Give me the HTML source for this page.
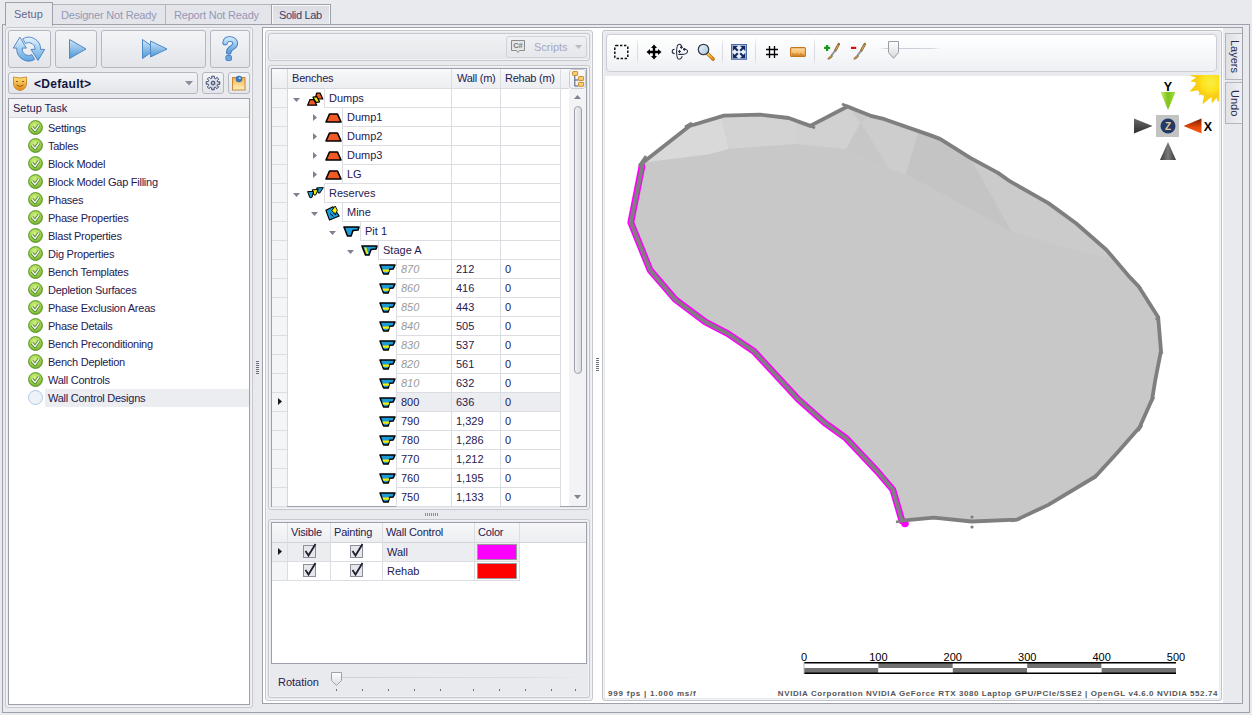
<!DOCTYPE html>
<html><head><meta charset="utf-8">
<style>
*{margin:0;padding:0;box-sizing:border-box}
html,body{width:1252px;height:715px;overflow:hidden;background:#e9eaee;font-family:"Liberation Sans",sans-serif;font-size:11px;color:#1f2050;position:relative}
.a{position:absolute}
.t{position:absolute;white-space:nowrap;line-height:19px;height:19px}
.bd{border:1px solid #9ea1ab}
.lb{border:1px solid #c6c8ce;border-radius:3px;box-shadow:inset 0 0 0 1px #f2f3f6}
.btn{position:absolute;border:1px solid #b5b8c1;border-radius:3px;background:linear-gradient(#f3f4f6,#e3e5ea)}
.row{position:absolute;height:20px;border-top:1px solid #dcdde2;border-bottom:1px solid #dcdde2}
.vl{position:absolute;width:1px;background:#dcdde2;z-index:1}
.hl{position:absolute;height:1px;background:#dcdde2;z-index:1}
</style></head><body>

<!-- ============ TABS ============ -->
<div class="a" style="left:2px;top:24px;width:1248px;height:1px;background:#9ea1ab"></div>
<div class="a" style="left:52px;top:4px;width:114px;height:21px;border:1px solid #b3b6bf;border-bottom:none;background:#e4e5ea"></div>
<div class="t" style="left:61px;top:6px;color:#9598b6;letter-spacing:-0.2px">Designer Not Ready</div>
<div class="a" style="left:166px;top:4px;width:106px;height:21px;border:1px solid #b3b6bf;border-left:none;border-bottom:none;background:#e4e5ea"></div>
<div class="t" style="left:174px;top:6px;color:#9598b6;letter-spacing:-0.2px">Report Not Ready</div>
<div class="a" style="left:271px;top:4px;width:60px;height:21px;border:1px solid #9ea1ab;border-bottom:none;background:linear-gradient(#dcdde2,#e6e7eb);box-shadow:inset 1px 1px 0 #f8f8fa,inset -1px 0 0 #f8f8fa"></div>
<div class="t" style="left:279px;top:6px;color:#3a3c6a;letter-spacing:-0.35px">Solid Lab</div>
<div class="a" style="left:5px;top:2px;width:48px;height:24px;border:1px solid #9ea1ab;border-bottom:none;background:#e9eaee"></div>
<div class="t" style="left:14px;top:5px;color:#65678b">Setup</div>

<!-- outer tab page border -->
<div class="a" style="left:2px;top:24px;width:1248px;height:689px;border:1px solid #9ea1ab;border-top:none"></div>
<div class="a" style="left:2px;top:24px;width:3px;height:1px;background:#9ea1ab"></div>
<div class="a" style="left:53px;top:24px;width:1197px;height:1px;background:#9ea1ab"></div>
<div class="a" style="left:6px;top:25px;width:46px;height:2px;background:#e9eaee"></div>

<!-- ============ LEFT PANEL ============ -->

<div class="a lb" style="left:5px;top:27px;width:248px;height:681px"></div>
<div class="btn" style="left:8px;top:30px;width:43px;height:38px"></div>
<div class="btn" style="left:55px;top:30px;width:42px;height:38px"></div>
<div class="btn" style="left:101px;top:30px;width:105px;height:38px"></div>
<div class="btn" style="left:210px;top:30px;width:40px;height:38px"></div>
<svg class="a" style="left:8px;top:30px" width="42" height="37" viewBox="0 0 42 37">
 <defs><linearGradient id="gb" gradientUnits="userSpaceOnUse" x1="0" y1="7" x2="0" y2="31"><stop offset="0" stop-color="#e6f5fe"/><stop offset="1" stop-color="#5fa6e2"/></linearGradient>
 <linearGradient id="gb2" x1="0" y1="0" x2="0" y2="1"><stop offset="0" stop-color="#cfe6f8"/><stop offset="1" stop-color="#4d97d6"/></linearGradient></defs>
 <g fill="url(#gb)" stroke="#3a74bd" stroke-width="0.8" stroke-linejoin="round">
 <path d="M11.9 7.2 L18.4 18.1 L14.2 18.1 A6.5 6.5 0 0 0 23.95 24.7 L26.65 29.4 A11.9 11.9 0 0 1 8.8 18.1 L5.2 18.1 Z"/>
 <path d="M30 30.5 L23 19.4 L27.2 19.4 A6.5 6.5 0 0 0 17.45 13.47 L14.75 8.8 A11.9 11.9 0 0 1 32.6 19.4 L36.7 19.4 Z"/>
 </g>
</svg>
<svg class="a" style="left:68px;top:38px" width="20" height="22" viewBox="0 0 20 22"><path d="M1.5 1.5 L18 11 L1.5 20.5 Z" fill="url(#gb2)" stroke="#4d88c8" stroke-width="1"/></svg>
<svg class="a" style="left:141px;top:38px" width="28" height="22" viewBox="0 0 28 22"><path d="M1.5 1.5 L15 11 L1.5 20.5 Z" fill="url(#gb2)" stroke="#4d88c8" stroke-width="1"/><path d="M9.5 3 L26 11 L9.5 19 Z" fill="url(#gb2)" stroke="#4d88c8" stroke-width="1"/></svg>
<svg class="a" style="left:210px;top:30px" width="40" height="37" viewBox="0 0 40 37"><defs><linearGradient id="gq" x1="0" y1="0" x2="0" y2="1"><stop offset="0" stop-color="#c5e4fa"/><stop offset="1" stop-color="#5f9fdc"/></linearGradient></defs><path d="M15.2 12.6 C15.6 10 17.8 9 19.8 9 C23.2 9 25.2 11 25.2 13.6 C25.2 16.3 22.6 17.2 20.6 18.7 C19.2 19.8 18.8 20.8 18.8 22" fill="none" stroke="#3a74bd" stroke-width="5.6" stroke-linecap="round"/><path d="M15.2 12.6 C15.6 10 17.8 9 19.8 9 C23.2 9 25.2 11 25.2 13.6 C25.2 16.3 22.6 17.2 20.6 18.7 C19.2 19.8 18.8 20.8 18.8 22" fill="none" stroke="url(#gq)" stroke-width="3.9" stroke-linecap="round"/><rect x="15.9" y="25.5" width="5.6" height="5" rx="1.2" fill="#6aa7e0" stroke="#3a74bd" stroke-width="0.8"/></svg>

<div class="btn" style="left:8px;top:72px;width:190px;height:22px"></div>
<svg class="a" style="left:12px;top:75px" width="16" height="16" viewBox="0 0 16 16"><defs><linearGradient id="gm" x1="0" y1="0" x2="0" y2="1"><stop offset="0" stop-color="#ffe27a"/><stop offset="1" stop-color="#e08b1a"/></linearGradient></defs><path d="M1.5 2 Q8 4 14.5 2 L14.5 9 Q14 14.5 8 15.5 Q2 14.5 1.5 9 Z" fill="url(#gm)" stroke="#c77a14" stroke-width="0.8"/><path d="M4 6.5 L6 6.5 M10 6.5 L12 6.5" stroke="#9a5a10" stroke-width="1"/><path d="M4.5 10 Q8 13 11.5 10" fill="none" stroke="#9a5a10" stroke-width="1"/></svg>
<div class="t" style="left:34px;top:74px;font-weight:bold;font-size:12px;color:#10163f;height:20px;line-height:20px;letter-spacing:0.3px">&lt;Default&gt;</div>
<svg class="a" style="left:185px;top:81px" width="8" height="5" viewBox="0 0 8 5"><path d="M0 0 L8 0 L4 4.5 Z" fill="#8d909c"/></svg>
<div class="btn" style="left:202px;top:72px;width:22px;height:22px"></div>
<svg class="a" style="left:205px;top:75px" width="16" height="16" viewBox="0 0 16 16"><defs><linearGradient id="gear" x1="0" y1="0" x2="1" y2="1"><stop offset="0" stop-color="#ffffff"/><stop offset="1" stop-color="#b9bfcc"/></linearGradient></defs><path d="M6.68 1.23 L9.32 1.23 L9.38 3.19 L10.80 3.85 L11.86 2.28 L13.72 4.14 L12.37 5.58 L12.91 7.05 L14.77 6.68 L14.77 9.32 L12.81 9.38 L12.15 10.80 L13.72 11.86 L11.86 13.72 L10.42 12.37 L8.95 12.91 L9.32 14.77 L6.68 14.77 L6.62 12.81 L5.20 12.15 L4.14 13.72 L2.28 11.86 L3.63 10.42 L3.09 8.95 L1.23 9.32 L1.23 6.68 L3.19 6.62 L3.85 5.20 L2.28 4.14 L4.14 2.28 L5.58 3.63 L7.05 3.09 Z" fill="url(#gear)" stroke="#2e3a66" stroke-width="0.9" stroke-linejoin="round"/><circle cx="8" cy="8" r="1.9" fill="#b5b8c2" stroke="#2e3a66" stroke-width="0.9"/></svg>
<div class="btn" style="left:228px;top:72px;width:22px;height:22px"></div>
<svg class="a" style="left:231px;top:74px" width="16" height="17" viewBox="0 0 16 17"><defs><linearGradient id="gn" x1="0" y1="0" x2="0" y2="1"><stop offset="0" stop-color="#f3b445"/><stop offset="1" stop-color="#fff2c4"/></linearGradient></defs><rect x="1.5" y="3.5" width="12.5" height="12.5" fill="url(#gn)" stroke="#c9893a" stroke-width="1"/><circle cx="8" cy="5" r="3" fill="#3d7fd0" stroke="#275c9e" stroke-width="0.6"/><circle cx="8.8" cy="4.2" r="0.9" fill="#cfe2f7"/></svg>

<div class="a bd" style="left:8px;top:98px;width:242px;height:607px;background:#fff"></div>
<div class="a" style="left:9px;top:99px;width:240px;height:19px;background:linear-gradient(#f6f6f8,#eeeff2);border-bottom:1px solid #d6d8de"></div>
<div class="t" style="left:13px;top:99px;height:19px;line-height:19px">Setup Task</div>
<div class="a" style="left:45px;top:389px;width:204px;height:18px;background:#ecedf0"></div>
<svg width="0" height="0" style="position:absolute"><defs>
<radialGradient id="gg" cx="0.45" cy="0.35" r="0.7"><stop offset="0" stop-color="#d2f08a"/><stop offset="0.55" stop-color="#a2d64c"/><stop offset="1" stop-color="#6aa82a"/></radialGradient>
<symbol id="chk" viewBox="0 0 15 15"><circle cx="7.5" cy="7.5" r="6.9" fill="url(#gg)" stroke="#4b8a1e" stroke-width="0.9"/><path d="M4.1 7.3 L7 10.6 L11 5" fill="none" stroke="#3f7420" stroke-width="3" stroke-linejoin="round"/><path d="M4.1 7.3 L7 10.6 L11 5" fill="none" stroke="#f2f4f0" stroke-width="1.5" stroke-linejoin="round"/></symbol>
</defs></svg>

<svg class="a" style="left:28px;top:120px" width="15" height="15" viewBox="0 0 15 15"><use href="#chk"/></svg>
<div class="t" style="left:48px;top:119px;height:18px;line-height:18px;letter-spacing:-0.25px">Settings</div>
<svg class="a" style="left:28px;top:138px" width="15" height="15" viewBox="0 0 15 15"><use href="#chk"/></svg>
<div class="t" style="left:48px;top:137px;height:18px;line-height:18px;letter-spacing:-0.25px">Tables</div>
<svg class="a" style="left:28px;top:156px" width="15" height="15" viewBox="0 0 15 15"><use href="#chk"/></svg>
<div class="t" style="left:48px;top:155px;height:18px;line-height:18px;letter-spacing:-0.25px">Block Model</div>
<svg class="a" style="left:28px;top:174px" width="15" height="15" viewBox="0 0 15 15"><use href="#chk"/></svg>
<div class="t" style="left:48px;top:173px;height:18px;line-height:18px;letter-spacing:-0.25px">Block Model Gap Filling</div>
<svg class="a" style="left:28px;top:192px" width="15" height="15" viewBox="0 0 15 15"><use href="#chk"/></svg>
<div class="t" style="left:48px;top:191px;height:18px;line-height:18px;letter-spacing:-0.25px">Phases</div>
<svg class="a" style="left:28px;top:210px" width="15" height="15" viewBox="0 0 15 15"><use href="#chk"/></svg>
<div class="t" style="left:48px;top:209px;height:18px;line-height:18px;letter-spacing:-0.25px">Phase Properties</div>
<svg class="a" style="left:28px;top:228px" width="15" height="15" viewBox="0 0 15 15"><use href="#chk"/></svg>
<div class="t" style="left:48px;top:227px;height:18px;line-height:18px;letter-spacing:-0.25px">Blast Properties</div>
<svg class="a" style="left:28px;top:246px" width="15" height="15" viewBox="0 0 15 15"><use href="#chk"/></svg>
<div class="t" style="left:48px;top:245px;height:18px;line-height:18px;letter-spacing:-0.25px">Dig Properties</div>
<svg class="a" style="left:28px;top:264px" width="15" height="15" viewBox="0 0 15 15"><use href="#chk"/></svg>
<div class="t" style="left:48px;top:263px;height:18px;line-height:18px;letter-spacing:-0.25px">Bench Templates</div>
<svg class="a" style="left:28px;top:282px" width="15" height="15" viewBox="0 0 15 15"><use href="#chk"/></svg>
<div class="t" style="left:48px;top:281px;height:18px;line-height:18px;letter-spacing:-0.25px">Depletion Surfaces</div>
<svg class="a" style="left:28px;top:300px" width="15" height="15" viewBox="0 0 15 15"><use href="#chk"/></svg>
<div class="t" style="left:48px;top:299px;height:18px;line-height:18px;letter-spacing:-0.25px">Phase Exclusion Areas</div>
<svg class="a" style="left:28px;top:318px" width="15" height="15" viewBox="0 0 15 15"><use href="#chk"/></svg>
<div class="t" style="left:48px;top:317px;height:18px;line-height:18px;letter-spacing:-0.25px">Phase Details</div>
<svg class="a" style="left:28px;top:336px" width="15" height="15" viewBox="0 0 15 15"><use href="#chk"/></svg>
<div class="t" style="left:48px;top:335px;height:18px;line-height:18px;letter-spacing:-0.25px">Bench Preconditioning</div>
<svg class="a" style="left:28px;top:354px" width="15" height="15" viewBox="0 0 15 15"><use href="#chk"/></svg>
<div class="t" style="left:48px;top:353px;height:18px;line-height:18px;letter-spacing:-0.25px">Bench Depletion</div>
<svg class="a" style="left:28px;top:372px" width="15" height="15" viewBox="0 0 15 15"><use href="#chk"/></svg>
<div class="t" style="left:48px;top:371px;height:18px;line-height:18px;letter-spacing:-0.25px">Wall Controls</div>
<svg class="a" style="left:28px;top:390px" width="15" height="15" viewBox="0 0 15 15"><circle cx="7.5" cy="7.5" r="7" fill="#edf1f8" stroke="#a9c3e2" stroke-width="0.9"/></svg>
<div class="t" style="left:48px;top:389px;height:18px;line-height:18px;letter-spacing:-0.25px">Wall Control Designs</div>



<!-- ============ RIGHT CONTAINER ============ -->
<div class="a" style="left:262px;top:27px;width:981px;height:677px;border:1px solid #9ea1ab;background:#fff"></div>

<svg width="0" height="0" style="position:absolute"><defs>
<symbol id="trap" viewBox="0 0 17 10"><path d="M4.5 1 L12.5 1 L16 9 L1 9 Z" fill="#f15a24" stroke="#000" stroke-width="1.6" stroke-linejoin="round"/></symbol>
<symbol id="dumps" viewBox="0 0 17 14"><path d="M9.6 1.2 L13.2 1.2 L15.8 7 L8.2 7 Z" fill="#f15a24" stroke="#000" stroke-width="1.2" stroke-linejoin="round"/><path d="M6 5.2 L9.8 4.6 L12.6 9.8 L8.8 10.4 Z" fill="#f5f000" stroke="#000" stroke-width="1.2" stroke-linejoin="round"/><path d="M3 7.6 L6.8 7.6 L9.8 13.2 L0.6 13.2 Z" fill="#f15a24" stroke="#000" stroke-width="1.2" stroke-linejoin="round"/></symbol>
<symbol id="pit" viewBox="0 0 17 11"><path d="M1 1 L16 1 L15 4 L10 4.5 L8 10 L4.5 10 Z" fill="#1b9bd7" stroke="#000" stroke-width="1.6" stroke-linejoin="round"/></symbol>
<symbol id="stage" viewBox="0 0 17 11"><path d="M1 1 L16 1 L15 4 L10 4.5 L8 10 L4.5 10 Z" fill="#1b9bd7" stroke="#000" stroke-width="1.6" stroke-linejoin="round"/><path d="M3.2 2.5 L5.3 2.5 L7.3 9 L5.6 9 Z" fill="#f5f000"/></symbol>
<symbol id="bench" viewBox="0 0 17 11"><path d="M1 0.9 L16 0.9 L14.2 4.9 L10.6 5.3 L9.2 10.1 L4.6 10.1 Z" fill="#1b9bd7" stroke="#000" stroke-width="1.5" stroke-linejoin="round"/><path d="M3.4 5.5 L10.4 5.5 L9.9 7.7 L4.1 7.7 Z" fill="#f5f000"/></symbol>
<symbol id="mine" viewBox="0 0 15 16"><path d="M0.9 5.3 L8 1.8 L14.2 11.1 L4.5 15.1 Z" fill="#1b9bd7" stroke="#000" stroke-width="1.1" stroke-linejoin="round"/><path d="M5 8.5 L8.5 11.5 M8 7.5 L11 10" stroke="#000" stroke-width="0.9"/><path d="M6.8 5.5 L10.2 1 L12.3 5.3 L10.6 9 L8.6 7.5 Z" fill="#f5f000" stroke="#000" stroke-width="0.9" stroke-linejoin="round"/></symbol>
<symbol id="reserves" viewBox="0 0 17 12"><path d="M9.6 0.9 L16.3 0.6 L12.8 6 L11.2 6 Z" fill="#1b9bd7" stroke="#000" stroke-width="1" stroke-linejoin="round"/><path d="M5.2 2.8 L11.2 2.5 L8.6 8 L7 8 Z" fill="#f5f000" stroke="#000" stroke-width="1" stroke-linejoin="round"/><path d="M0.6 4.6 L6.6 4.4 L4.9 10.6 L2.8 10.6 Z" fill="#1b9bd7" stroke="#000" stroke-width="1" stroke-linejoin="round"/></symbol>
<symbol id="exd" viewBox="0 0 7 4"><path d="M0 0 L7 0 L3.5 4 Z" fill="#7d8190"/></symbol>
<symbol id="exr" viewBox="0 0 4 7"><path d="M0 0 L4 3.5 L0 7 Z" fill="#7d8190"/></symbol>
</defs></svg>
<!-- middle panel -->
<div class="a lb" style="left:265px;top:30px;width:328px;height:671px;background:#e9eaee"></div>
<div class="a lb" style="left:268px;top:33px;width:322px;height:28px;background:linear-gradient(#f1f2f4,#e5e6ea)"></div>
<div class="a" style="left:506px;top:36px;width:81px;height:22px;border:1px solid #d0d2d8;border-radius:3px;background:linear-gradient(#eff0f3,#e6e7eb)"></div>
<svg class="a" style="left:510px;top:39px" width="16" height="16" viewBox="0 0 16 16"><path d="M1.5 1.5 H14.5 V11.5 H9.5 L8 13.5 L6.5 11.5 H1.5 Z" fill="#e6e6e6" stroke="#8b8b8b" stroke-width="1"/><text x="8" y="9.2" font-family="Liberation Sans" font-size="7.5" text-anchor="middle" fill="#7b7b7b" font-weight="bold">C#</text></svg>
<div class="t" style="left:534px;top:37px;height:20px;line-height:20px;color:#a5a8be">Scripts</div>
<svg class="a" style="left:575px;top:45px" width="7" height="4" viewBox="0 0 7 4"><path d="M0 0 L7 0 L3.5 4 Z" fill="#b9bcc6"/></svg>
<div class="a lb" style="left:268px;top:65px;width:322px;height:445px"></div>
<div class="a bd" style="left:271px;top:68px;width:316px;height:439px;background:#fff"></div>
<div class="a" style="left:272px;top:89px;width:15px;height:417px;background:#f4f5f7"></div>
<!-- header -->
<div class="a" style="left:272px;top:69px;width:297px;height:20px;background:linear-gradient(#f8f8fa,#eceef1);border-bottom:1px solid #d2d4da"></div>
<div class="vl" style="left:287px;top:69px;height:437px;background:#d6d8dd"></div>
<div class="vl" style="left:451px;top:69px;height:437px"></div>
<div class="vl" style="left:500px;top:69px;height:437px"></div>
<div class="vl" style="left:560px;top:69px;height:437px"></div>
<div class="t" style="left:292px;top:68px;height:20px;line-height:20px;letter-spacing:-0.2px">Benches</div>
<div class="t" style="left:457px;top:68px;height:20px;line-height:20px;letter-spacing:-0.25px">Wall (m)</div>
<div class="t" style="left:505px;top:68px;height:20px;line-height:20px;letter-spacing:-0.25px">Rehab (m)</div>
<div class="a" style="left:569px;top:69px;width:17px;height:20px;border:1px solid #c9cbd2;border-radius:3px;background:linear-gradient(#fbfbfc,#eceef1)"></div>
<svg class="a" style="left:571px;top:70px" width="15" height="18" viewBox="0 0 15 18"><path d="M3.8 5 V16 H7.5 M3.8 10 H7.5" fill="none" stroke="#48577a" stroke-width="1"/><rect x="1.6" y="1.6" width="5" height="3.8" rx="0.5" fill="#f9d27a" stroke="#cf8a26" stroke-width="1"/><rect x="7.6" y="6.6" width="5" height="3.8" rx="0.5" fill="#f9d27a" stroke="#cf8a26" stroke-width="1"/><rect x="7.6" y="12.4" width="5" height="3.8" rx="0.5" fill="#f9d27a" stroke="#cf8a26" stroke-width="1"/></svg>
<!-- scrollbar -->
<div class="a" style="left:569px;top:89px;width:17px;height:417px;background:#f3f3f5"></div>
<svg class="a" style="left:574px;top:95px" width="7" height="4" viewBox="0 0 7 4"><path d="M0 4 L7 4 L3.5 0 Z" fill="#7d8190"/></svg>
<div class="a" style="left:574px;top:106px;width:8px;height:268px;border:1px solid #9ea1ab;border-radius:4px;background:linear-gradient(90deg,#f2f2f4,#d9dadf)"></div>
<svg class="a" style="left:574px;top:495px" width="7" height="4" viewBox="0 0 7 4"><path d="M0 0 L7 0 L3.5 4 Z" fill="#7d8190"/></svg>

<div class="hl" style="left:272px;top:107px;width:15px"></div>
<div class="hl" style="left:324px;top:88px;width:236px"></div>
<div class="hl" style="left:324px;top:107px;width:236px"></div>
<div class="vl" style="left:324px;top:88px;height:19px"></div>
<svg class="a" style="left:293px;top:98px" width="7" height="4"><use href="#exd"/></svg>
<svg class="a" style="left:307px;top:92px" width="17" height="14"><use href="#dumps"/></svg>
<div class="t" style="left:329px;top:89px;">Dumps</div>
<div class="hl" style="left:272px;top:126px;width:15px"></div>
<div class="hl" style="left:342px;top:107px;width:218px"></div>
<div class="hl" style="left:342px;top:126px;width:218px"></div>
<div class="vl" style="left:342px;top:107px;height:19px"></div>
<svg class="a" style="left:313px;top:114px" width="4" height="7"><use href="#exr"/></svg>
<svg class="a" style="left:325px;top:113px" width="17" height="10"><use href="#trap"/></svg>
<div class="t" style="left:347px;top:108px;">Dump1</div>
<div class="hl" style="left:272px;top:145px;width:15px"></div>
<div class="hl" style="left:342px;top:126px;width:218px"></div>
<div class="hl" style="left:342px;top:145px;width:218px"></div>
<div class="vl" style="left:342px;top:126px;height:19px"></div>
<svg class="a" style="left:313px;top:133px" width="4" height="7"><use href="#exr"/></svg>
<svg class="a" style="left:325px;top:132px" width="17" height="10"><use href="#trap"/></svg>
<div class="t" style="left:347px;top:127px;">Dump2</div>
<div class="hl" style="left:272px;top:164px;width:15px"></div>
<div class="hl" style="left:342px;top:145px;width:218px"></div>
<div class="hl" style="left:342px;top:164px;width:218px"></div>
<div class="vl" style="left:342px;top:145px;height:19px"></div>
<svg class="a" style="left:313px;top:152px" width="4" height="7"><use href="#exr"/></svg>
<svg class="a" style="left:325px;top:151px" width="17" height="10"><use href="#trap"/></svg>
<div class="t" style="left:347px;top:146px;">Dump3</div>
<div class="hl" style="left:272px;top:183px;width:15px"></div>
<div class="hl" style="left:342px;top:164px;width:218px"></div>
<div class="hl" style="left:342px;top:183px;width:218px"></div>
<div class="vl" style="left:342px;top:164px;height:19px"></div>
<svg class="a" style="left:313px;top:171px" width="4" height="7"><use href="#exr"/></svg>
<svg class="a" style="left:325px;top:170px" width="17" height="10"><use href="#trap"/></svg>
<div class="t" style="left:347px;top:165px;">LG</div>
<div class="hl" style="left:272px;top:202px;width:15px"></div>
<div class="hl" style="left:324px;top:183px;width:236px"></div>
<div class="hl" style="left:324px;top:202px;width:236px"></div>
<div class="vl" style="left:324px;top:183px;height:19px"></div>
<svg class="a" style="left:293px;top:193px" width="7" height="4"><use href="#exd"/></svg>
<svg class="a" style="left:307px;top:187px" width="17" height="12"><use href="#reserves"/></svg>
<div class="t" style="left:329px;top:184px;">Reserves</div>
<div class="hl" style="left:272px;top:221px;width:15px"></div>
<div class="hl" style="left:342px;top:202px;width:218px"></div>
<div class="hl" style="left:342px;top:221px;width:218px"></div>
<div class="vl" style="left:342px;top:202px;height:19px"></div>
<svg class="a" style="left:311px;top:212px" width="7" height="4"><use href="#exd"/></svg>
<svg class="a" style="left:325px;top:205px" width="15" height="16"><use href="#mine"/></svg>
<div class="t" style="left:347px;top:203px;">Mine</div>
<div class="hl" style="left:272px;top:240px;width:15px"></div>
<div class="hl" style="left:360px;top:221px;width:200px"></div>
<div class="hl" style="left:360px;top:240px;width:200px"></div>
<div class="vl" style="left:360px;top:221px;height:19px"></div>
<svg class="a" style="left:329px;top:231px" width="7" height="4"><use href="#exd"/></svg>
<svg class="a" style="left:343px;top:226px" width="17" height="11"><use href="#pit"/></svg>
<div class="t" style="left:365px;top:222px;">Pit 1</div>
<div class="hl" style="left:272px;top:259px;width:15px"></div>
<div class="hl" style="left:378px;top:240px;width:182px"></div>
<div class="hl" style="left:378px;top:259px;width:182px"></div>
<div class="vl" style="left:378px;top:240px;height:19px"></div>
<svg class="a" style="left:347px;top:250px" width="7" height="4"><use href="#exd"/></svg>
<svg class="a" style="left:361px;top:245px" width="17" height="11"><use href="#stage"/></svg>
<div class="t" style="left:383px;top:241px;">Stage A</div>
<div class="hl" style="left:272px;top:278px;width:15px"></div>
<div class="hl" style="left:396px;top:259px;width:164px"></div>
<div class="hl" style="left:396px;top:278px;width:164px"></div>
<div class="vl" style="left:396px;top:259px;height:19px"></div>
<svg class="a" style="left:379px;top:264px" width="17" height="11"><use href="#bench"/></svg>
<div class="t" style="left:401px;top:260px;color:#9a9a9a;font-style:italic">870</div>
<div class="t" style="left:456px;top:260px">212</div>
<div class="t" style="left:505px;top:260px">0</div>
<div class="hl" style="left:272px;top:297px;width:15px"></div>
<div class="hl" style="left:396px;top:278px;width:164px"></div>
<div class="hl" style="left:396px;top:297px;width:164px"></div>
<div class="vl" style="left:396px;top:278px;height:19px"></div>
<svg class="a" style="left:379px;top:283px" width="17" height="11"><use href="#bench"/></svg>
<div class="t" style="left:401px;top:279px;color:#9a9a9a;font-style:italic">860</div>
<div class="t" style="left:456px;top:279px">416</div>
<div class="t" style="left:505px;top:279px">0</div>
<div class="hl" style="left:272px;top:316px;width:15px"></div>
<div class="hl" style="left:396px;top:297px;width:164px"></div>
<div class="hl" style="left:396px;top:316px;width:164px"></div>
<div class="vl" style="left:396px;top:297px;height:19px"></div>
<svg class="a" style="left:379px;top:302px" width="17" height="11"><use href="#bench"/></svg>
<div class="t" style="left:401px;top:298px;color:#9a9a9a;font-style:italic">850</div>
<div class="t" style="left:456px;top:298px">443</div>
<div class="t" style="left:505px;top:298px">0</div>
<div class="hl" style="left:272px;top:335px;width:15px"></div>
<div class="hl" style="left:396px;top:316px;width:164px"></div>
<div class="hl" style="left:396px;top:335px;width:164px"></div>
<div class="vl" style="left:396px;top:316px;height:19px"></div>
<svg class="a" style="left:379px;top:321px" width="17" height="11"><use href="#bench"/></svg>
<div class="t" style="left:401px;top:317px;color:#9a9a9a;font-style:italic">840</div>
<div class="t" style="left:456px;top:317px">505</div>
<div class="t" style="left:505px;top:317px">0</div>
<div class="hl" style="left:272px;top:354px;width:15px"></div>
<div class="hl" style="left:396px;top:335px;width:164px"></div>
<div class="hl" style="left:396px;top:354px;width:164px"></div>
<div class="vl" style="left:396px;top:335px;height:19px"></div>
<svg class="a" style="left:379px;top:340px" width="17" height="11"><use href="#bench"/></svg>
<div class="t" style="left:401px;top:336px;color:#9a9a9a;font-style:italic">830</div>
<div class="t" style="left:456px;top:336px">537</div>
<div class="t" style="left:505px;top:336px">0</div>
<div class="hl" style="left:272px;top:373px;width:15px"></div>
<div class="hl" style="left:396px;top:354px;width:164px"></div>
<div class="hl" style="left:396px;top:373px;width:164px"></div>
<div class="vl" style="left:396px;top:354px;height:19px"></div>
<svg class="a" style="left:379px;top:359px" width="17" height="11"><use href="#bench"/></svg>
<div class="t" style="left:401px;top:355px;color:#9a9a9a;font-style:italic">820</div>
<div class="t" style="left:456px;top:355px">561</div>
<div class="t" style="left:505px;top:355px">0</div>
<div class="hl" style="left:272px;top:392px;width:15px"></div>
<div class="hl" style="left:396px;top:373px;width:164px"></div>
<div class="hl" style="left:396px;top:392px;width:164px"></div>
<div class="vl" style="left:396px;top:373px;height:19px"></div>
<svg class="a" style="left:379px;top:378px" width="17" height="11"><use href="#bench"/></svg>
<div class="t" style="left:401px;top:374px;color:#9a9a9a;font-style:italic">810</div>
<div class="t" style="left:456px;top:374px">632</div>
<div class="t" style="left:505px;top:374px">0</div>
<div class="hl" style="left:272px;top:411px;width:15px"></div>
<div class="a" style="left:397px;top:393px;width:163px;height:18px;background:#ecedf0"></div>
<svg class="a" style="left:278px;top:398px" width="4" height="7" viewBox="0 0 4 7"><path d="M0 0 L4 3.5 L0 7 Z" fill="#1a1a1a"/></svg>
<div class="hl" style="left:396px;top:392px;width:164px"></div>
<div class="hl" style="left:396px;top:411px;width:164px"></div>
<div class="vl" style="left:396px;top:392px;height:19px"></div>
<svg class="a" style="left:379px;top:397px" width="17" height="11"><use href="#bench"/></svg>
<div class="t" style="left:401px;top:393px;">800</div>
<div class="t" style="left:456px;top:393px">636</div>
<div class="t" style="left:505px;top:393px">0</div>
<div class="hl" style="left:272px;top:430px;width:15px"></div>
<div class="hl" style="left:396px;top:411px;width:164px"></div>
<div class="hl" style="left:396px;top:430px;width:164px"></div>
<div class="vl" style="left:396px;top:411px;height:19px"></div>
<svg class="a" style="left:379px;top:416px" width="17" height="11"><use href="#bench"/></svg>
<div class="t" style="left:401px;top:412px;">790</div>
<div class="t" style="left:456px;top:412px">1,329</div>
<div class="t" style="left:505px;top:412px">0</div>
<div class="hl" style="left:272px;top:449px;width:15px"></div>
<div class="hl" style="left:396px;top:430px;width:164px"></div>
<div class="hl" style="left:396px;top:449px;width:164px"></div>
<div class="vl" style="left:396px;top:430px;height:19px"></div>
<svg class="a" style="left:379px;top:435px" width="17" height="11"><use href="#bench"/></svg>
<div class="t" style="left:401px;top:431px;">780</div>
<div class="t" style="left:456px;top:431px">1,286</div>
<div class="t" style="left:505px;top:431px">0</div>
<div class="hl" style="left:272px;top:468px;width:15px"></div>
<div class="hl" style="left:396px;top:449px;width:164px"></div>
<div class="hl" style="left:396px;top:468px;width:164px"></div>
<div class="vl" style="left:396px;top:449px;height:19px"></div>
<svg class="a" style="left:379px;top:454px" width="17" height="11"><use href="#bench"/></svg>
<div class="t" style="left:401px;top:450px;">770</div>
<div class="t" style="left:456px;top:450px">1,212</div>
<div class="t" style="left:505px;top:450px">0</div>
<div class="hl" style="left:272px;top:487px;width:15px"></div>
<div class="hl" style="left:396px;top:468px;width:164px"></div>
<div class="hl" style="left:396px;top:487px;width:164px"></div>
<div class="vl" style="left:396px;top:468px;height:19px"></div>
<svg class="a" style="left:379px;top:473px" width="17" height="11"><use href="#bench"/></svg>
<div class="t" style="left:401px;top:469px;">760</div>
<div class="t" style="left:456px;top:469px">1,195</div>
<div class="t" style="left:505px;top:469px">0</div>
<div class="hl" style="left:272px;top:506px;width:15px"></div>
<div class="hl" style="left:396px;top:487px;width:164px"></div>
<div class="hl" style="left:396px;top:506px;width:164px"></div>
<div class="vl" style="left:396px;top:487px;height:19px"></div>
<svg class="a" style="left:379px;top:492px" width="17" height="11"><use href="#bench"/></svg>
<div class="t" style="left:401px;top:488px;">750</div>
<div class="t" style="left:456px;top:488px">1,133</div>
<div class="t" style="left:505px;top:488px">0</div>

<!-- splitter -->
<svg class="a" style="left:425px;top:513px" width="14" height="3" viewBox="0 0 14 3"><path d="M0.5 0 V3 M2.5 0 V3 M4.5 0 V3 M6.5 0 V3 M8.5 0 V3 M10.5 0 V3 M12.5 0 V3" stroke="#8a8d98" stroke-width="1"/></svg>
<div class="a lb" style="left:268px;top:519px;width:322px;height:179px"></div>
<div class="a bd" style="left:271px;top:522px;width:316px;height:142px;background:#fff"></div>
<div class="a" style="left:272px;top:543px;width:15px;height:37px;background:#f4f5f7"></div>
<div class="a" style="left:272px;top:523px;width:314px;height:20px;background:linear-gradient(#f8f8fa,#eceef1);border-bottom:1px solid #d2d4da"></div>
<div class="a" style="left:520px;top:523px;width:66px;height:20px;background:linear-gradient(#f6f6f8,#eceef1);border-bottom:1px solid #d2d4da"></div>
<div class="vl" style="left:287px;top:523px;height:58px"></div>
<div class="vl" style="left:330px;top:523px;height:58px"></div>
<div class="vl" style="left:382px;top:523px;height:58px"></div>
<div class="vl" style="left:474px;top:523px;height:58px"></div>
<div class="vl" style="left:519px;top:523px;height:58px"></div>
<div class="a" style="left:272px;top:543px;width:58px;height:18px;background:#ecedf0"></div>
<div class="a" style="left:383px;top:543px;width:136px;height:18px;background:#ecedf0"></div>
<div class="hl" style="left:272px;top:561px;width:248px"></div>
<div class="hl" style="left:272px;top:580px;width:248px"></div>
<div class="t" style="left:291px;top:522px;height:20px;line-height:20px;letter-spacing:-0.2px">Visible</div>
<div class="t" style="left:334px;top:522px;height:20px;line-height:20px;letter-spacing:-0.2px">Painting</div>
<div class="t" style="left:386px;top:522px;height:20px;line-height:20px;letter-spacing:-0.2px">Wall Control</div>
<div class="t" style="left:478px;top:522px;height:20px;line-height:20px;letter-spacing:-0.2px">Color</div>
<svg class="a" style="left:278px;top:548px" width="4" height="7" viewBox="0 0 4 7"><path d="M0 0 L4 3.5 L0 7 Z" fill="#1a1a1a"/></svg>
<svg width="0" height="0" style="position:absolute"><defs><symbol id="cb" viewBox="0 0 14 15"><rect x="0.5" y="2.5" width="12" height="12" fill="#e6e7ea" stroke="#8c8f99"/><path d="M2.5 8 L5.5 12.5 L12.5 1" fill="none" stroke="#1e2030" stroke-width="1.8"/></symbol></defs></svg>
<svg class="a" style="left:303px;top:543px" width="14" height="15"><use href="#cb"/></svg>
<svg class="a" style="left:350px;top:543px" width="14" height="15"><use href="#cb"/></svg>
<svg class="a" style="left:303px;top:562px" width="14" height="15"><use href="#cb"/></svg>
<svg class="a" style="left:350px;top:562px" width="14" height="15"><use href="#cb"/></svg>
<div class="t" style="left:387px;top:543px">Wall</div>
<div class="t" style="left:387px;top:562px">Rehab</div>
<div class="a" style="left:477px;top:544px;width:40px;height:16px;background:#ff00ff;border:1px solid #9a9a9a"></div>
<div class="a" style="left:477px;top:563px;width:40px;height:16px;background:#ff0000;border:1px solid #9a9a9a"></div>
<!-- rotation -->
<div class="t" style="left:278px;top:673px;color:#1f2050">Rotation</div>
<div class="a" style="left:341px;top:677px;width:240px;height:1px;background:linear-gradient(90deg,#cfd1d6,#dcdde2 80%,#e9eaee)"></div>
<svg class="a" style="left:330px;top:671px" width="13" height="16" viewBox="0 0 13 16"><defs><linearGradient id="gt" x1="0" y1="0" x2="0" y2="1"><stop offset="0" stop-color="#fff"/><stop offset="1" stop-color="#dcdde2"/></linearGradient></defs><path d="M1.5 1.5 H11.5 V9.5 L6.5 14.5 L1.5 9.5 Z" fill="url(#gt)" stroke="#9ea1ab" stroke-width="1"/></svg>

<div class="a" style="left:336px;top:689px;width:1px;height:2px;background:#6d707a"></div>
<div class="a" style="left:362px;top:689px;width:1px;height:2px;background:#6d707a"></div>
<div class="a" style="left:388px;top:689px;width:1px;height:2px;background:#6d707a"></div>
<div class="a" style="left:414px;top:689px;width:1px;height:2px;background:#6d707a"></div>
<div class="a" style="left:440px;top:689px;width:1px;height:2px;background:#6d707a"></div>
<div class="a" style="left:473px;top:689px;width:1px;height:2px;background:#6d707a"></div>
<div class="a" style="left:499px;top:689px;width:1px;height:2px;background:#6d707a"></div>
<div class="a" style="left:525px;top:689px;width:1px;height:2px;background:#6d707a"></div>
<div class="a" style="left:551px;top:689px;width:1px;height:2px;background:#6d707a"></div>
<div class="a" style="left:575px;top:689px;width:1px;height:2px;background:#6d707a"></div>

<!-- viewport panel -->
<div class="a lb" style="left:602px;top:30px;width:620px;height:671px;background:#e9eaee;border-color:#c0c2c9"></div>
<div class="a" style="left:605px;top:76px;width:614px;height:622px;background:#fff"></div>
<div class="a" style="left:606px;top:34px;width:611px;height:38px;border:1px solid #cdcfd5;border-radius:4px;background:linear-gradient(#ffffff,#f7f8fa 50%,#eff0f3)"></div>
<!-- separators -->
<div class="a" style="left:637px;top:38px;width:1px;height:28px;background:linear-gradient(#f7f8fa,#d9dbe0 30%,#d9dbe0 70%,#f0f1f4)"></div>
<div class="a" style="left:722px;top:38px;width:1px;height:28px;background:linear-gradient(#f7f8fa,#d9dbe0 30%,#d9dbe0 70%,#f0f1f4)"></div>
<div class="a" style="left:755px;top:38px;width:1px;height:28px;background:linear-gradient(#f7f8fa,#d9dbe0 30%,#d9dbe0 70%,#f0f1f4)"></div>
<div class="a" style="left:814px;top:38px;width:1px;height:28px;background:linear-gradient(#f7f8fa,#d9dbe0 30%,#d9dbe0 70%,#f0f1f4)"></div>
<!-- select rect -->
<svg class="a" style="left:610px;top:40px" width="24" height="24" viewBox="0 0 24 24"><rect x="4.8" y="5.6" width="13" height="12.8" rx="1.2" fill="none" stroke="#111" stroke-width="1.5" stroke-dasharray="2.4 1.6"/></svg>
<!-- move -->
<svg class="a" style="left:646px;top:44px" width="16" height="16" viewBox="0 0 16 16"><path d="M8 0.5 L11 4 H9.2 V6.8 H12 V5 L15.5 8 L12 11 V9.2 H9.2 V12 H11 L8 15.5 L5 12 H6.8 V9.2 H4 V11 L0.5 8 L4 5 V6.8 H6.8 V4 H5 Z" fill="#000"/></svg>
<!-- orbit -->
<svg class="a" style="left:668px;top:40px" width="24" height="24" viewBox="0 0 24 24" fill="none" stroke="#2a3040" stroke-width="1.1"><path d="M13.6 6.5 C13.5 5 12.5 4.2 11.2 4.2 C9.5 4.2 8.6 7.5 8.6 11.8 C8.6 16 9.5 19.3 11.2 19.3 C12.8 19.3 13.8 17.5 14.3 16.3"/><path d="M6.6 9.2 C5 9.4 4.2 10.3 4.2 11.4 C4.2 12.5 5 13.4 6.6 13.6"/><path d="M15.2 9 C18 9.2 19.6 10 19.6 11.3 C19.6 13 17 14.4 14 14.4 H10.3"/><path d="M13.4 6 V8.8 M12 7.4 H14.8 M16.4 8 V10.8 M15 9.4 H17.8 M11.5 10.1 V12.9 M10.1 11.5 H12.9" stroke-width="1.2"/></svg>
<!-- zoom -->
<svg class="a" style="left:697px;top:43px" width="18" height="18" viewBox="0 0 18 18"><defs><linearGradient id="gz" x1="0" y1="0" x2="1" y2="1"><stop offset="0" stop-color="#e9f3fb"/><stop offset="1" stop-color="#a9c7e3"/></linearGradient><linearGradient id="gh" x1="0" y1="0" x2="1" y2="1"><stop offset="0" stop-color="#f7d35a"/><stop offset="1" stop-color="#e38a16"/></linearGradient></defs><path d="M10.5 10.5 L16 16" stroke="#b06a10" stroke-width="3.6" stroke-linecap="round"/><path d="M10.5 10.5 L16 16" stroke="url(#gh)" stroke-width="2.4" stroke-linecap="round"/><circle cx="6.5" cy="6.5" r="5.2" fill="url(#gz)" stroke="#3b3f48" stroke-width="1.3"/></svg>
<!-- zoom extents -->
<svg class="a" style="left:727px;top:40px" width="24" height="24" viewBox="0 0 24 24"><rect x="4.6" y="4.6" width="14.8" height="14.6" fill="#eaf0f9" stroke="#4a68ae" stroke-width="1.2"/><g fill="#102a5c" stroke="#102a5c"><path d="M6 6 H10.5 L6 10.5 Z M18 6 H13.5 L18 10.5 Z M6 18 H10.5 L6 13.5 Z M18 18 H13.5 L18 13.5 Z" stroke-width="0.5"/><path d="M7.5 7.5 L10.8 10.8 M16.5 7.5 L13.2 10.8 M7.5 16.5 L10.8 13.2 M16.5 16.5 L13.2 13.2" stroke-width="2"/></g></svg>
<!-- grid # -->
<svg class="a" style="left:765px;top:45px" width="14" height="14" viewBox="0 0 14 14"><path d="M4.5 1 V13 M9.5 1 V13 M1 4.5 H13 M1 9.5 H13" stroke="#000" stroke-width="1.3"/></svg>
<!-- ruler -->
<svg class="a" style="left:790px;top:47px" width="16" height="10" viewBox="0 0 16 10"><defs><linearGradient id="gr" x1="0" y1="0" x2="0" y2="1"><stop offset="0" stop-color="#fde2a8"/><stop offset="1" stop-color="#f0a040"/></linearGradient></defs><rect x="0.6" y="0.6" width="14.8" height="8.8" rx="1" fill="url(#gr)" stroke="#c8741c" stroke-width="1.1"/><path d="M3 9 V6 M5 9 V7 M7 9 V6 M9 9 V7 M11 9 V6 M13 9 V7" stroke="#b86416" stroke-width="0.8"/></svg>
<!-- brush + -->
<svg class="a" style="left:822px;top:42px" width="20" height="19" viewBox="0 0 20 19"><path d="M2.1 5.9 H8.1 M5.1 2.9 V8.9" stroke="#139a13" stroke-width="2.2"/><path d="M16.8 2.2 L13.2 8.6" stroke="#8c6a2a" stroke-width="2.6" stroke-linecap="round"/><path d="M16.6 2.6 L13.6 8" stroke="#d8b060" stroke-width="1"/><path d="M13.2 8.6 L9.6 13.4" stroke="#8f9296" stroke-width="1.8"/><path d="M9.8 13.2 C8 13.8 6.6 15.6 5.8 17.2 C7.8 17 9.6 16 10.4 14.2 Z" fill="#c49a48" stroke="#7a5a20" stroke-width="0.7"/></svg>
<!-- brush - -->
<svg class="a" style="left:848px;top:42px" width="20" height="19" viewBox="0 0 20 19"><path d="M3 5.9 H8.2" stroke="#d01010" stroke-width="2.2"/><path d="M16.8 2.2 L13.2 8.6" stroke="#8c6a2a" stroke-width="2.6" stroke-linecap="round"/><path d="M16.6 2.6 L13.6 8" stroke="#d8b060" stroke-width="1"/><path d="M13.2 8.6 L9.6 13.4" stroke="#8f9296" stroke-width="1.8"/><path d="M9.8 13.2 C8 13.8 6.6 15.6 5.8 17.2 C7.8 17 9.6 16 10.4 14.2 Z" fill="#c49a48" stroke="#7a5a20" stroke-width="0.7"/></svg>
<!-- slider -->
<div class="a" style="left:879px;top:48px;width:62px;height:1px;background:linear-gradient(90deg,rgba(180,170,200,0),#c9c4d4 15%,#d7d4de 85%,rgba(200,200,210,0))"></div>
<svg class="a" style="left:887px;top:40px" width="13" height="20" viewBox="0 0 13 20"><defs><linearGradient id="gs" x1="0" y1="0" x2="0" y2="1"><stop offset="0" stop-color="#fdfdfd"/><stop offset="1" stop-color="#d9dade"/></linearGradient></defs><path d="M1.5 1.5 H11.5 V12.5 L6.5 18.3 L1.5 12.5 Z" fill="url(#gs)" stroke="#9a9ca6" stroke-width="1"/></svg>

<svg class="a" style="left:0;top:0" width="1252" height="715" viewBox="0 0 1252 715"><defs><clipPath id="vc"><rect x="605" y="76" width="614" height="622"/></clipPath></defs><g clip-path="url(#vc)">
<polygon points="643.0,162.5 689.5,126.0 724.0,115.6 760.0,114.6 788.7,118.0 810.2,125.9 847.4,106.5 870.0,115.6 884.5,119.2 930.0,135.1 940.0,138.9 970.3,157.8 998.0,172.9 1010.6,181.7 1048.4,203.1 1076.0,223.3 1106.3,249.7 1130.0,277.4 1138.7,286.5 1158.2,317.3 1161.0,350.8 1155.3,380.0 1152.2,398.9 1139.6,427.2 1117.5,452.4 1095.5,476.5 1048.3,504.9 1016.8,519.6 971.7,521.5 933.7,517.7 901.9,520.7 892.8,489.6 877.5,471.6 846.2,438.3 824.6,422.7 798.2,399.2 754.0,351.4 728.0,333.8 705.4,322.0 675.2,299.4 650.0,270.0 630.8,222.5" fill="#c8c8c8"/>
<polygon points="643.0,162.5 689.5,126.0 721.6,118.0 728.8,149.0 708.0,154.5" fill="#d9d9d9"/>
<polygon points="721.6,118.0 724.0,115.6 760.0,114.6 788.7,118.0 795.9,120.0 795.9,143.9 728.8,149.0" fill="#d3d3d3"/>
<polygon points="795.9,120.0 810.2,125.9 847.4,106.5 860.6,122.8 846.2,149.0 795.9,143.9" fill="#d1d1d1"/>
<polygon points="860.6,122.8 870.0,115.6 884.5,119.2 918.0,133.5 906.0,174.3 889.3,169.5" fill="#cdcdcd"/>
<polygon points="860.6,122.8 889.3,169.5 846.2,149.0" fill="#c7c7c7"/>
<polygon points="918.0,133.5 930.0,135.1 940.0,138.9 970.3,157.8 972.8,162.8 1011.9,232.1 930.0,186.8 906.0,174.3" fill="#c4c4c4"/>
<polygon points="972.8,162.8 970.3,157.8 998.0,172.9 1010.6,181.7 1048.4,203.1 1076.0,223.3 1106.3,249.7 1106.3,258.5 1011.9,232.1" fill="#cbcbcb"/>
<polyline points="901.9,520.7 892.8,489.6 877.5,471.6 846.2,438.3 824.6,422.7 798.2,399.2 754.0,351.4 728.0,333.8 705.4,322.0 675.2,299.4 650.0,270.0 630.8,222.5 642.0,166.0" fill="none" stroke="#ff00ff" stroke-width="6.8" stroke-linejoin="round" stroke-linecap="round"/>
<circle cx="905" cy="523.5" r="3.8" fill="#ff00ff"/>
<polygon points="643.0,162.5 689.5,126.0 724.0,115.6 760.0,114.6 788.7,118.0 810.2,125.9 847.4,106.5 870.0,115.6 884.5,119.2 930.0,135.1 940.0,138.9 970.3,157.8 998.0,172.9 1010.6,181.7 1048.4,203.1 1076.0,223.3 1106.3,249.7 1130.0,277.4 1138.7,286.5 1158.2,317.3 1161.0,350.8 1155.3,380.0 1152.2,398.9 1139.6,427.2 1117.5,452.4 1095.5,476.5 1048.3,504.9 1016.8,519.6 971.7,521.5 933.7,517.7 901.9,520.7 892.8,489.6 877.5,471.6 846.2,438.3 824.6,422.7 798.2,399.2 754.0,351.4 728.0,333.8 705.4,322.0 675.2,299.4 650.0,270.0 630.8,222.5" fill="none" stroke="#7f7f7f" stroke-width="3.8" stroke-linejoin="round"/>
<path d="M646 156 L639 166 M685 127 L692 123 M842 104 L852 108 M806 124 L815 128 M896 522 L906 520 M1011 521 L1020 519 M1154 397 L1151 402 M1142 425 L1138 431 M1097 474 L1093 479 M1159 316 L1156 320 M1160 349 L1162 354 M1137 284 L1141 289" stroke="#7f7f7f" stroke-width="2.8"/>
<circle cx="972" cy="517" r="1.6" fill="#7f7f7f"/><circle cx="972" cy="527" r="1.6" fill="#7f7f7f"/>
</g></svg>

<svg class="a" style="left:1130px;top:75px" width="89" height="90" viewBox="1130 75 89 90">
<defs>
<radialGradient id="sun" cx="0.5" cy="0.5" r="0.5"><stop offset="0" stop-color="#f8ee48"/><stop offset="0.6" stop-color="#fde21a"/><stop offset="1" stop-color="#f8c81a"/></radialGradient>
<linearGradient id="gy" x1="0" y1="0" x2="1" y2="0"><stop offset="0" stop-color="#c9f06a"/><stop offset="0.5" stop-color="#7cc21a"/><stop offset="1" stop-color="#a6e040"/></linearGradient>
<linearGradient id="gxo" x1="0" y1="0" x2="0" y2="1"><stop offset="0" stop-color="#7a1a00"/><stop offset="0.6" stop-color="#e64a0a"/><stop offset="1" stop-color="#ff5a10"/></linearGradient>
<linearGradient id="gd" x1="0" y1="0" x2="0" y2="1"><stop offset="0" stop-color="#6b6b6b"/><stop offset="1" stop-color="#2e2e2e"/></linearGradient>
<linearGradient id="gd2" x1="0" y1="0" x2="1" y2="0"><stop offset="0" stop-color="#3a3a3a"/><stop offset="0.5" stop-color="#7a7a7a"/><stop offset="1" stop-color="#3a3a3a"/></linearGradient>
</defs>
<polygon points="1190.5,75 1190.9,76 1196,77.6 1190.1,81.6 1197.5,82.6 1189.3,91.7 1200.2,90.1 1198.6,95.4 1204.5,93.3 1202.3,104.4 1211.4,97 1211.9,103.4 1216.7,97.8 1217.7,101.8 1219,101 1219,75" fill="#f6cf12"/><circle cx="1210.6" cy="82.4" r="15" fill="url(#sun)"/>
<text x="1168" y="90.5" font-family="Liberation Sans" font-weight="bold" font-size="12.5" text-anchor="middle" fill="#000">Y</text>
<polygon points="1160.5,92 1175.5,92 1168,110" fill="url(#gy)"/>
<rect x="1156" y="115" width="23" height="22" fill="#c3c3c3"/>
<circle cx="1168" cy="126" r="7.5" fill="#213a6a"/>
<text x="1168" y="130" font-family="Liberation Sans" font-weight="bold" font-size="10" text-anchor="middle" fill="#e8c890">Z</text>
<polygon points="1134,118.5 1152.5,126 1134,133.5" fill="url(#gd)"/>
<polygon points="1201.5,118.5 1183.5,126 1201.5,133.5" fill="url(#gxo)"/>
<text x="1208" y="130.5" font-family="Liberation Sans" font-weight="bold" font-size="12.5" text-anchor="middle" fill="#000">X</text>
<polygon points="1168,142 1160,160 1176,160" fill="url(#gd2)"/>
</svg>

<svg class="a" style="left:795px;top:648px" width="400" height="30" viewBox="795 648 400 30">
<rect x="804.0" y="663" width="74.4" height="5" fill="#fff"/>
<rect x="804.0" y="668" width="74.4" height="5" fill="#707070"/>
<rect x="878.4" y="663" width="74.4" height="5" fill="#707070"/>
<rect x="878.4" y="668" width="74.4" height="5" fill="#fff"/>
<rect x="952.8" y="663" width="74.4" height="5" fill="#fff"/>
<rect x="952.8" y="668" width="74.4" height="5" fill="#707070"/>
<rect x="1027.2" y="663" width="74.4" height="5" fill="#707070"/>
<rect x="1027.2" y="668" width="74.4" height="5" fill="#fff"/>
<rect x="1101.6" y="663" width="74.4" height="5" fill="#fff"/>
<rect x="1101.6" y="668" width="74.4" height="5" fill="#707070"/>
<rect x="804" y="662" width="372" height="1.5" fill="#000"/><rect x="804" y="672.5" width="372" height="1.5" fill="#000"/><rect x="803.5" y="662" width="1" height="12" fill="#bbb"/>
<text x="804.0" y="660.5" font-family="Liberation Sans" font-size="11" text-anchor="middle" fill="#000">0</text>
<text x="878.4" y="660.5" font-family="Liberation Sans" font-size="11" text-anchor="middle" fill="#000">100</text>
<text x="952.8" y="660.5" font-family="Liberation Sans" font-size="11" text-anchor="middle" fill="#000">200</text>
<text x="1027.2" y="660.5" font-family="Liberation Sans" font-size="11" text-anchor="middle" fill="#000">300</text>
<text x="1101.6" y="660.5" font-family="Liberation Sans" font-size="11" text-anchor="middle" fill="#000">400</text>
<text x="1176.0" y="660.5" font-family="Liberation Sans" font-size="11" text-anchor="middle" fill="#000">500</text>
</svg>
<div class="t" style="left:608px;top:686px;height:16px;line-height:16px;font-size:8px;font-weight:bold;color:#555;letter-spacing:0.78px">999 fps | 1.000 ms/f</div>
<div class="t" style="left:700px;top:686px;width:518px;text-align:right;height:16px;line-height:16px;font-size:8px;font-weight:bold;color:#555;letter-spacing:0.58px">NVIDIA Corporation NVIDIA GeForce RTX 3080 Laptop GPU/PCIe/SSE2 | OpenGL v4.6.0 NVIDIA 552.74</div>

<div class="a" style="left:1223px;top:28px;width:19px;height:675px;background:#e9eaee"></div>
<div class="a" style="left:1225px;top:33px;width:17px;height:47px;border:1px solid #b3b6bf;border-right:none;background:linear-gradient(90deg,#dfe0e5,#eeeff2)"></div>
<div class="a" style="left:1225px;top:82px;width:17px;height:42px;border:1px solid #b3b6bf;border-right:none;background:linear-gradient(90deg,#e1e2e7,#eeeff2)"></div>
<div class="t" style="left:1226px;top:33px;width:17px;height:47px;line-height:17px;writing-mode:vertical-rl;text-align:center;color:#2a2b4f">Layers</div>
<div class="t" style="left:1226px;top:82px;width:17px;height:42px;line-height:17px;writing-mode:vertical-rl;text-align:center;color:#2a2b4f">Undo</div>
<svg class="a" style="left:596px;top:358px" width="3" height="14" viewBox="0 0 3 14"><path d="M0 0.5 H3 M0 2.5 H3 M0 4.5 H3 M0 6.5 H3 M0 8.5 H3 M0 10.5 H3 M0 12.5 H3" stroke="#6d707a" stroke-width="1"/></svg>
<svg class="a" style="left:256px;top:361px" width="3" height="14" viewBox="0 0 3 14"><path d="M0 0.5 H3 M0 2.5 H3 M0 4.5 H3 M0 6.5 H3 M0 8.5 H3 M0 10.5 H3 M0 12.5 H3" stroke="#6d707a" stroke-width="1"/></svg>


</body></html>
